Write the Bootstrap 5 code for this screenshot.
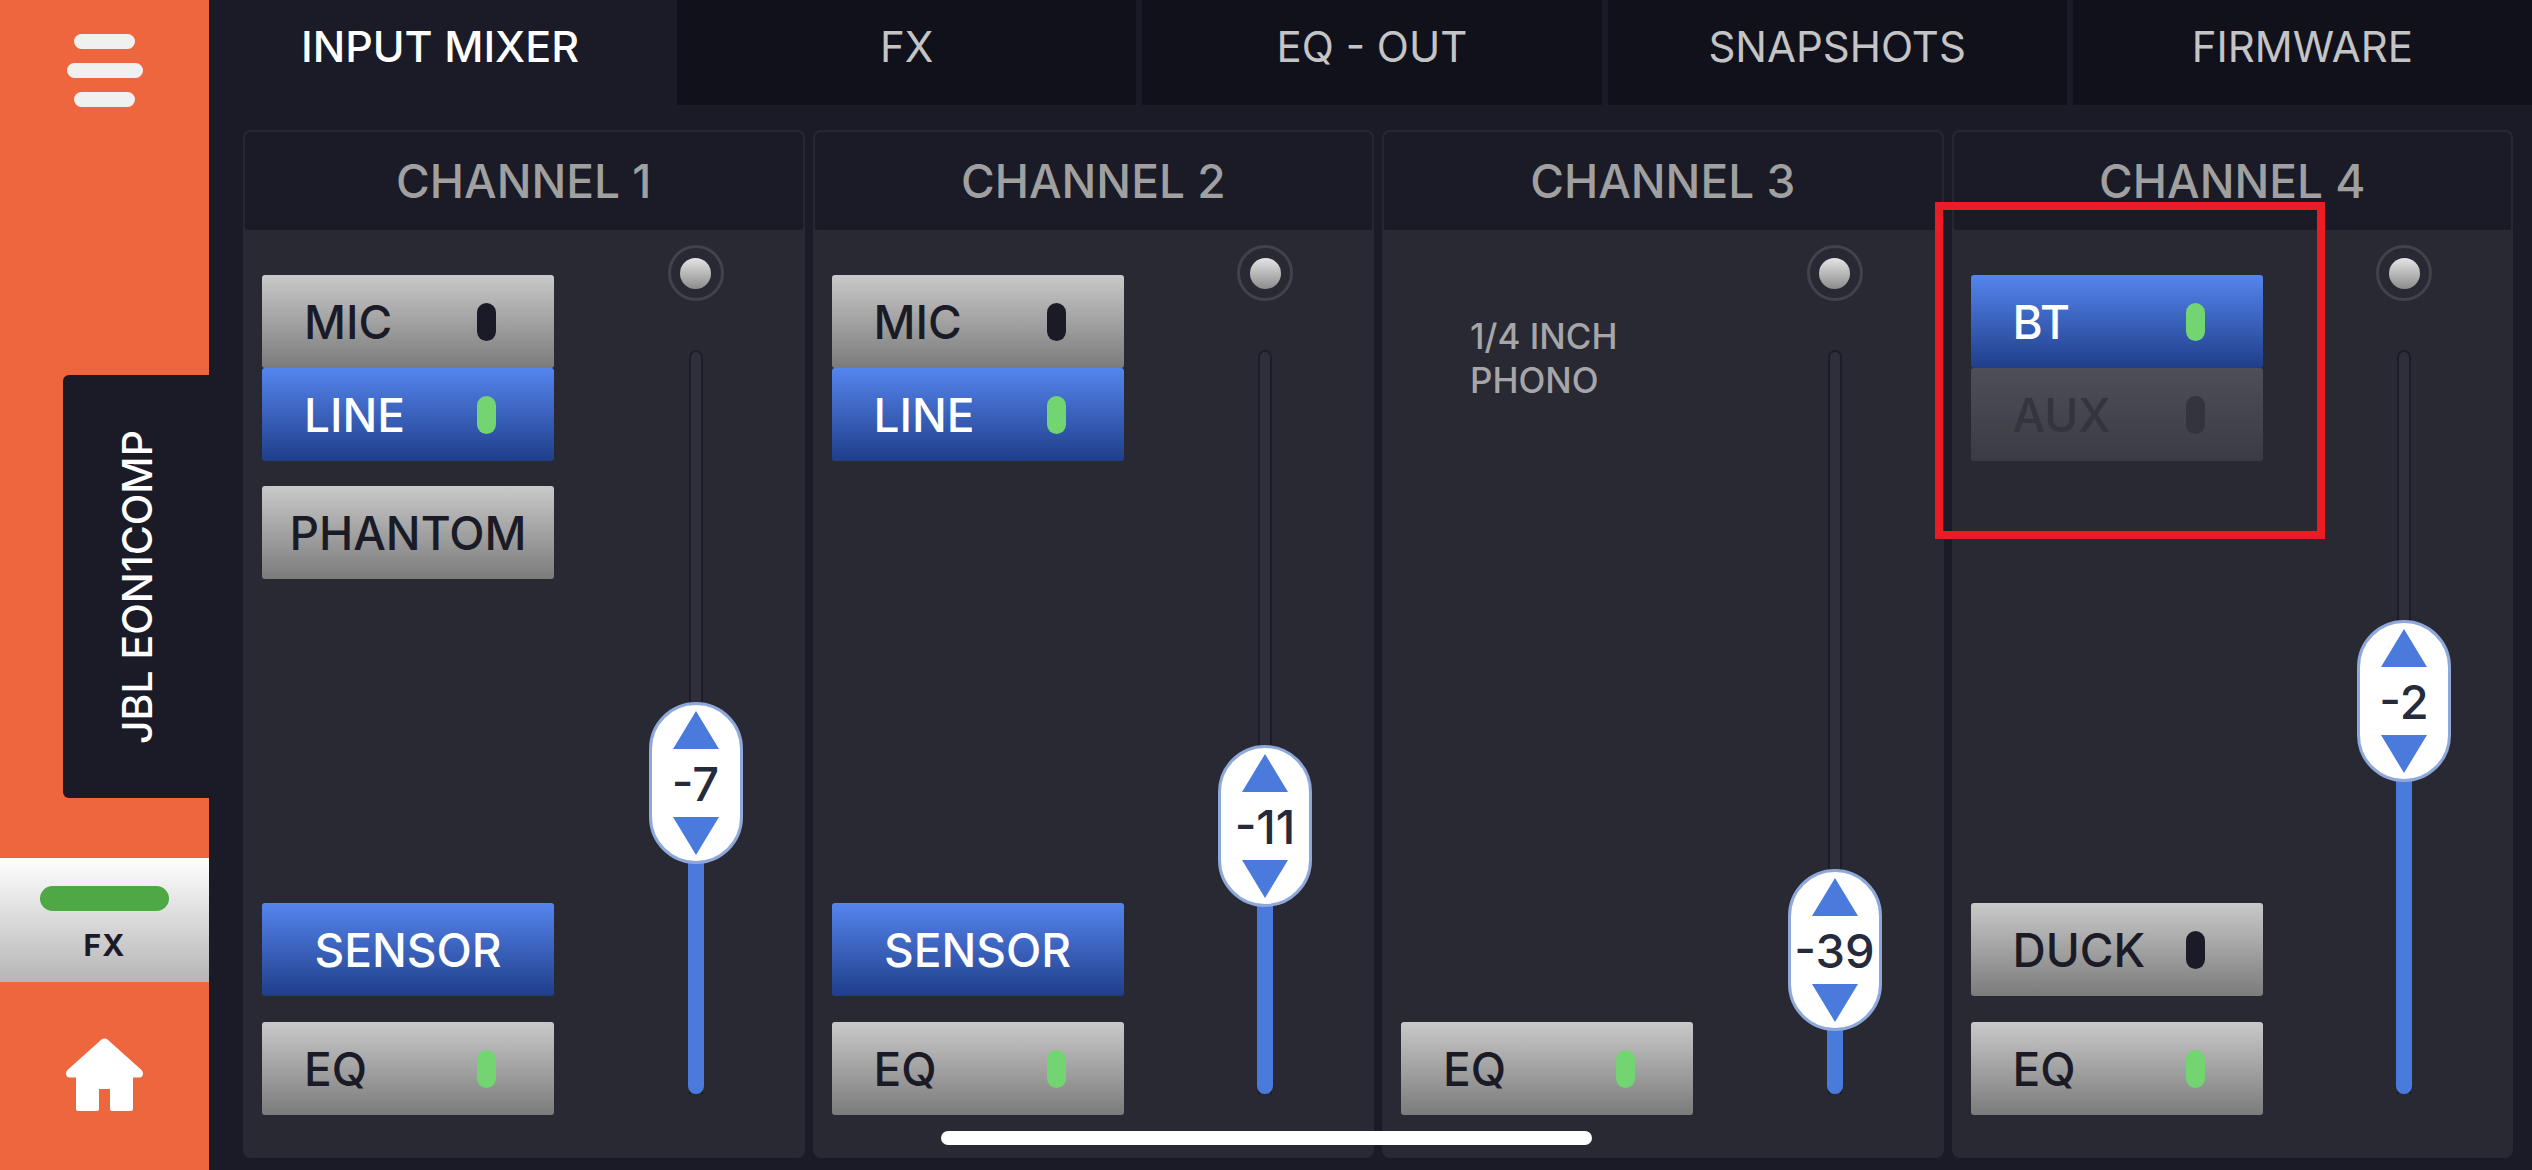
<!DOCTYPE html>
<html lang="en">
<head>
  <meta charset="UTF-8" />
  <meta name="viewport" content="width=device-width, initial-scale=1.0" />
  <title>JBL EON1COMP</title>
  <link href="https://cdn.jsdelivr.net/npm/bootstrap@5.3.3/dist/css/bootstrap.min.css" rel="stylesheet">
  <style>
    body { background-color: #1a1b26; font-family: Inter, "Liberation Sans", sans-serif; width: 2532px; height: 1170px; overflow: hidden; }
    .app-shell { height: 1170px; position: relative; }
    .side-rail { width: 209px; background: #ee663d; flex: none; }
    .burger { padding-top: 34px; height: 375px; gap: 14px; }
    .burger span { display: block; height: 15px; width: 61px; border-radius: 8px; background: #f0f0f0; }
    .burger span:nth-child(2) { width: 76px; }
    .device-tab { width: 146px; height: 423px; background: #1a1b26; color: #fff; font-size: 41px; font-weight: 500; writing-mode: vertical-rl; transform: rotate(180deg); border-radius: 0 6px 6px 0; padding-right: 3px; }
    .fx-tile { margin-top: 60px; height: 124px; background: linear-gradient(#fff, #b5b5b5); color: #1a1b26; font-size: 30px; font-weight: 700; letter-spacing: 1px; }
    .fx-pill { width: 129px; height: 25px; border-radius: 13px; background: #4ea845; margin: 28px 0 21px; }
    .fx-label { line-height: 26px; }
    .home-link { margin-top: 56px; }
    .top-tabs { height: 105px; gap: 6px; }
    .top-tab { flex: 1 1 0; background: #10111a; color: #c4c4c6; font-size: 42px; line-height: 1; padding-bottom: 12px; }
    .top-tab.is-on { background: #1a1b26; color: #fff; font-weight: 500; font-size: 43px; flex: none; width: 462px; }
    .mixer { padding: 25px 19px 12px 34px; gap: 8px; }
    .strip { flex: 1 1 0; background: #282933; border-radius: 8px; min-width: 0; }
    .strip-head { height: 100px; background: #1a1b26; border: 2px solid #262732; border-bottom: 0; border-radius: 8px 8px 4px 4px; color: #a0a0a0; font-size: 46px; font-weight: 500; flex: none; padding-top: 1px; }
    .btn-col { width: 292px; margin-left: 19px; padding: 45px 0 43px; }
    .mix-btn { height: 93px; width: 292px; border-radius: 3px; padding: 0 0 0 42px; background: linear-gradient(#c9c9c9, #7b7b7b); color: #1a1b26; font-size: 46px; font-weight: 500; line-height: 1; }
    .mix-btn.is-center { padding: 0; justify-content: center; }
    .mix-btn.is-blue { background: linear-gradient(#5585ee, #1f3e8a); color: #fff; }
    .mix-btn.is-off { background: linear-gradient(#4e4f56, #3a3b43); color: #33343d; }
    .led { width: 19px; height: 38px; border-radius: 10px; background: #1a1b26; margin-left: auto; margin-right: 58px; }
    .led.is-green { background: #72d572; }
    .led.is-dim { background: #33343d; }
    .jack-note { color: #a6a6a9; font-size: 35px; line-height: 44px; padding: 39px 0 0 69px; font-weight: 500; }
    .gap-phantom { margin-top: 25px; }
    .gap-eq { margin-top: 26px; }
    .slider-col { width: 112px; margin-left: auto; margin-right: 53px; padding: 15px 0 64px; }
    .knob { width: 56px; height: 56px; border-radius: 50%; border: 3px solid #41424c; flex: none; }
    .knob span { width: 31px; height: 31px; border-radius: 50%; background: linear-gradient(#e4e4e4, #8c8c8c); display: block; }
    .track { width: 14px; margin-top: 49px; background: #2e2f3a; border: 2px solid #1c1d28; border-bottom: 0; border-radius: 7px 7px 0 0; position: relative; }
    .track-fill { position: absolute; left: -3px; bottom: 0; width: 16px; background: #4a7bdc; border-radius: 0 0 8px 8px; }
    .thumb { position: absolute; left: 50%; top: 0; transform: translate(-50%, -50%); width: 94px; height: 162px; background: #fff; border: 3px solid #8ea8dc; border-radius: 47px; color: #252a3c; font-size: 47px; font-weight: 500; line-height: 1; padding: 6px 0; }
    .tri-up, .tri-down { width: 0; height: 0; border-left: 23px solid transparent; border-right: 23px solid transparent; flex: none; }
    .tri-up { border-bottom: 38px solid #4a7bdc; }
    .tri-down { border-top: 38px solid #4a7bdc; }
    .home-bar { position: absolute; left: 941px; top: 1131px; width: 651px; height: 14px; border-radius: 7px; background: #fff; }
    .red-mark { position: absolute; left: 1935px; top: 202px; width: 390px; height: 337px; border: 8px solid #ed1c24; }
  </style>
</head>
<body>
<div class="app-shell d-flex">
  <div class="side-rail d-flex flex-column">
    <div class="burger d-flex flex-column align-items-center">
      <span></span><span></span><span></span>
    </div>
    <div class="device-tab d-flex align-items-center justify-content-center align-self-end">JBL EON1COMP</div>
    <div class="fx-tile d-flex flex-column align-items-center">
      <div class="fx-pill"></div>
      <div class="fx-label">FX</div>
    </div>
    <div class="home-link d-flex justify-content-center">
      <svg width="77" height="73" viewBox="0 0 77 73"><path d="M35.5 1.5 Q38.5 -0.5 41.5 1.5 L75.5 32 Q77 33.5 77 35.5 Q77 39.5 73 39.5 L67 39.5 L67 71 Q67 73 65 73 L46 73 Q44 73 44 71 L44 51 L33 51 L33 71 Q33 73 31 73 L12 73 Q10 73 10 71 L10 39.5 L4 39.5 Q0 39.5 0 35.5 Q0 33.5 1.5 32 Z" fill="#fff"/></svg>
    </div>
  </div>

  <div class="flex-grow-1 d-flex flex-column" style="min-width:0">
    <div class="top-tabs d-flex">
      <div class="top-tab is-on d-flex align-items-center justify-content-center">INPUT MIXER</div>
      <div class="top-tab d-flex align-items-center justify-content-center">FX</div>
      <div class="top-tab d-flex align-items-center justify-content-center">EQ - OUT</div>
      <div class="top-tab d-flex align-items-center justify-content-center">SNAPSHOTS</div>
      <div class="top-tab d-flex align-items-center justify-content-center">FIRMWARE</div>
    </div>

    <div class="mixer flex-grow-1 d-flex">
      <div class="strip d-flex flex-column">
        <div class="strip-head d-flex align-items-center justify-content-center">CHANNEL 1</div>
        <div class="d-flex flex-grow-1">
          <div class="btn-col d-flex flex-column">
            <div class="mix-btn d-flex align-items-center">MIC<span class="led"></span></div>
            <div class="mix-btn is-blue d-flex align-items-center">LINE<span class="led is-green"></span></div>
            <div class="mix-btn is-center gap-phantom d-flex align-items-center">PHANTOM</div>
            <div class="mix-btn is-blue is-center d-flex align-items-center mt-auto">SENSOR</div>
            <div class="mix-btn gap-eq d-flex align-items-center">EQ<span class="led is-green"></span></div>
          </div>
          <div class="slider-col d-flex flex-column align-items-center">
            <div class="knob d-flex align-items-center justify-content-center"><span></span></div>
            <div class="track flex-grow-1">
              <div class="track-fill" style="height:311px">
                <div class="thumb d-flex flex-column align-items-center justify-content-between"><span class="tri-up"></span>-7<span class="tri-down"></span></div>
              </div>
            </div>
          </div>
        </div>
      </div>

      <div class="strip d-flex flex-column">
        <div class="strip-head d-flex align-items-center justify-content-center">CHANNEL 2</div>
        <div class="d-flex flex-grow-1">
          <div class="btn-col d-flex flex-column">
            <div class="mix-btn d-flex align-items-center">MIC<span class="led"></span></div>
            <div class="mix-btn is-blue d-flex align-items-center">LINE<span class="led is-green"></span></div>
            <div class="mix-btn is-blue is-center d-flex align-items-center mt-auto">SENSOR</div>
            <div class="mix-btn gap-eq d-flex align-items-center">EQ<span class="led is-green"></span></div>
          </div>
          <div class="slider-col d-flex flex-column align-items-center">
            <div class="knob d-flex align-items-center justify-content-center"><span></span></div>
            <div class="track flex-grow-1">
              <div class="track-fill" style="height:268px">
                <div class="thumb d-flex flex-column align-items-center justify-content-between"><span class="tri-up"></span>-11<span class="tri-down"></span></div>
              </div>
            </div>
          </div>
        </div>
      </div>

      <div class="strip d-flex flex-column">
        <div class="strip-head d-flex align-items-center justify-content-center">CHANNEL 3</div>
        <div class="d-flex flex-grow-1">
          <div class="btn-col d-flex flex-column">
            <div class="jack-note">1/4 INCH<br>PHONO</div>
            <div class="mix-btn d-flex align-items-center mt-auto">EQ<span class="led is-green"></span></div>
          </div>
          <div class="slider-col d-flex flex-column align-items-center">
            <div class="knob d-flex align-items-center justify-content-center"><span></span></div>
            <div class="track flex-grow-1">
              <div class="track-fill" style="height:144px">
                <div class="thumb d-flex flex-column align-items-center justify-content-between"><span class="tri-up"></span>-39<span class="tri-down"></span></div>
              </div>
            </div>
          </div>
        </div>
      </div>

      <div class="strip d-flex flex-column">
        <div class="strip-head d-flex align-items-center justify-content-center">CHANNEL 4</div>
        <div class="d-flex flex-grow-1">
          <div class="btn-col d-flex flex-column">
            <div class="mix-btn is-blue d-flex align-items-center">BT<span class="led is-green"></span></div>
            <div class="mix-btn is-off d-flex align-items-center">AUX<span class="led is-dim"></span></div>
            <div class="mix-btn d-flex align-items-center mt-auto">DUCK<span class="led"></span></div>
            <div class="mix-btn gap-eq d-flex align-items-center">EQ<span class="led is-green"></span></div>
          </div>
          <div class="slider-col d-flex flex-column align-items-center">
            <div class="knob d-flex align-items-center justify-content-center"><span></span></div>
            <div class="track flex-grow-1">
              <div class="track-fill" style="height:393px">
                <div class="thumb d-flex flex-column align-items-center justify-content-between"><span class="tri-up"></span>-2<span class="tri-down"></span></div>
              </div>
            </div>
          </div>
        </div>
      </div>
    </div>
  </div>

  <div class="red-mark"></div>
  <div class="home-bar"></div>
</div>
<script src="https://cdn.jsdelivr.net/npm/bootstrap@5.3.3/dist/js/bootstrap.bundle.min.js"></script>
</body>
</html>
